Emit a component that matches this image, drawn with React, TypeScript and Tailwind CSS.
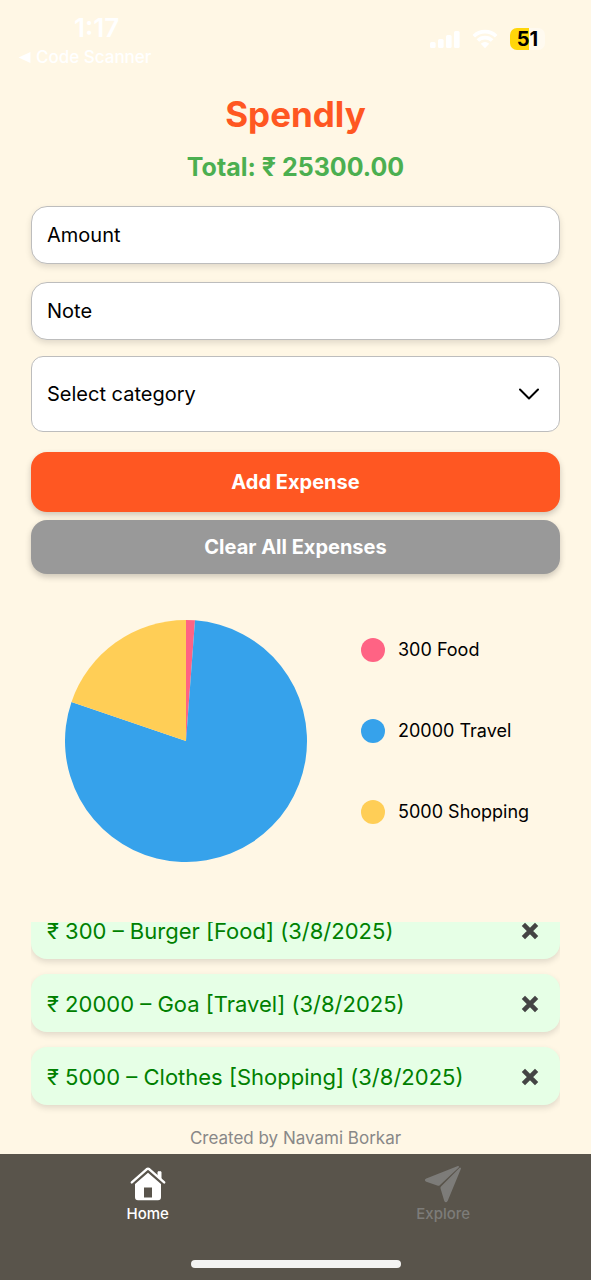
import { useState } from "react";

type Expense = {
  amount: number;
  note: string;
  category: string;
  date: string;
};

const initialExpenses: Expense[] = [
  { amount: 300, note: "Burger", category: "Food", date: "3/8/2025" },
  { amount: 20000, note: "Goa", category: "Travel", date: "3/8/2025" },
  { amount: 5000, note: "Clothes", category: "Shopping", date: "3/8/2025" },
];

const categories = [
  { name: "Food", fill: "fill-[#ff6384]", dot: "bg-[#ff6384]" },
  { name: "Travel", fill: "fill-[#36a2eb]", dot: "bg-[#36a2eb]" },
  { name: "Shopping", fill: "fill-[#ffce56]", dot: "bg-[#ffce56]" },
];

function StatusBar() {
  return (
    <header className="flex h-24 shrink-0 items-start justify-between pl-[18px] pr-[46px] text-white">
      <div className="flex flex-col pt-3">
        <span className="pl-14 text-[26px] leading-8 font-semibold">1:17</span>
        <a href="#scanner" className="flex items-center gap-[5px] text-[17px] leading-[26px] font-medium">
          <svg viewBox="0 0 12 12" className="size-[13px]" fill="currentColor" aria-hidden="true">
            <path d="M11.5 1v10L0.5 6z" />
          </svg>
          Code Scanner
        </a>
      </div>
      <div className="flex items-center gap-3 pt-7">
        <svg viewBox="0 0 30 20" className="h-5 w-[30px]" fill="currentColor" aria-label="Signal">
          <rect x="0" y="13" width="5.6" height="6" rx="1.5" />
          <rect x="8" y="10" width="5.6" height="9" rx="1.5" />
          <rect x="16" y="6" width="5.6" height="13" rx="1.5" />
          <rect x="24" y="2" width="5.6" height="17" rx="1.5" />
        </svg>
        <svg viewBox="0 0 26 20" className="h-5 w-[26px]" fill="none" stroke="currentColor" strokeWidth="3.6" aria-label="Wi-Fi">
          <path d="M1.8 7.2a16 16 0 0 1 22.4 0" />
          <path d="M5.9 11.6a10 10 0 0 1 14.2 0" />
          <path d="M13 19.2l-4.2-4.4a6 6 0 0 1 8.4 0z" fill="currentColor" stroke="none" />
        </svg>
        <div className="flex h-[22px] w-[35px] items-center justify-center rounded-[7px] bg-[linear-gradient(to_right,#ffd60a_54%,#fffaf0_54%)] text-xl leading-none font-bold text-black">
          51
        </div>
      </div>
    </header>
  );
}

function PieChart({ totals }: { totals: number[] }) {
  const sum = totals.reduce((a, b) => a + b, 0);
  let angle = 0;
  const point = (a: number) => `${100 + 100 * Math.sin(a)} ${100 - 100 * Math.cos(a)}`;
  return (
    <svg viewBox="0 0 200 200" className="size-[242px] shrink-0" role="img" aria-label="Expenses by category">
      {totals.map((value, i) => {
        if (!value) return null;
        const start = angle;
        const sweep = (value / sum) * Math.PI * 2;
        angle += sweep;
        if (value === sum) {
          return <circle key={i} cx="100" cy="100" r="100" className={categories[i].fill} />;
        }
        return (
          <path
            key={i}
            className={categories[i].fill}
            d={`M100 100L${point(start)}A100 100 0 ${sweep > Math.PI ? 1 : 0} 1 ${point(angle)}Z`}
          />
        );
      })}
    </svg>
  );
}

function HomeIcon() {
  return (
    <svg viewBox="0 0 36 36" className="size-9" aria-hidden="true">
      <path d="M1.8 16.4L16.6 3.3a2.2 2.2 0 0 1 2.8 0L34.2 16.4" fill="none" stroke="currentColor" strokeWidth="2.4" strokeLinecap="round" strokeLinejoin="round" />
      <path d="M28 5.8h3v7.4l-3-2.6z" fill="currentColor" stroke="currentColor" strokeLinejoin="round" />
      <path fillRule="evenodd" fill="currentColor" d="M18 6.8L31 18v13.2a3 3 0 0 1-3 3H8a3 3 0 0 1-3-3V18zM14 21.5v10h8v-10z" />
    </svg>
  );
}

function PlaneIcon() {
  return (
    <svg viewBox="0 0 38 38" className="size-[38px]" fill="currentColor" stroke="currentColor" strokeWidth="1.6" strokeLinejoin="round" aria-hidden="true">
      <path d="M34.2 1.8L2.6 14.2q-1.8.9 0 1.8L14.2 20q.6.1 1-.3z" />
      <path d="M36.2 3.4L17.6 22q-.5.6-.3 1.2L21 35.6q.9 1.6 1.9 0z" />
    </svg>
  );
}

export default function App() {
  const [expenses, setExpenses] = useState(initialExpenses);
  const [amount, setAmount] = useState("");
  const [note, setNote] = useState("");
  const [category, setCategory] = useState("");

  const total = expenses.reduce((acc, e) => acc + e.amount, 0);
  const totals = categories.map((c) =>
    expenses.filter((e) => e.category === c.name).reduce((acc, e) => acc + e.amount, 0),
  );

  const addExpense = () => {
    const value = Number(amount);
    if (!value || !category) return;
    setExpenses([...expenses, { amount: value, note, category, date: new Date().toLocaleDateString() }]);
    setAmount("");
    setNote("");
    setCategory("");
  };

  const field =
    "h-[58px] w-full rounded-2xl border border-[#bdbdbd] bg-white px-[15px] text-xl text-black shadow-[0_3px_6px_rgba(0,0,0,0.12)] placeholder:text-black";

  return (
    <div className="flex h-screen flex-col bg-[#fff7e5] font-['Inter','Noto_Sans',sans-serif]">
      <StatusBar />
      <main className="flex min-h-0 flex-1 flex-col px-[31px]">
        <h1 className="text-center text-[35px] leading-9 font-bold text-[#ff5722]">Spendly</h1>
        <p className="mt-[17px] text-center text-[25px] leading-9 font-bold text-[#4caf50]">
          Total: ₹ {total.toFixed(2)}
        </p>
        <div className="mt-[21px] flex flex-col gap-4">
          <div className="flex flex-col gap-[18px]">
            <input
              aria-label="Amount"
              placeholder="Amount"
              inputMode="decimal"
              className={field}
              value={amount}
              onChange={(e) => setAmount(e.target.value)}
            />
            <input
              aria-label="Note"
              placeholder="Note"
              className={field}
              value={note}
              onChange={(e) => setNote(e.target.value)}
            />
          </div>
          <div className="relative">
            <select
              aria-label="Category"
              value={category}
              onChange={(e) => setCategory(e.target.value)}
              className="block h-[76px] w-full appearance-none rounded-xl border border-[#bdbdbd] bg-white px-[15px] text-xl text-black"
            >
              <option value="">Select category</option>
              {categories.map((c) => (
                <option key={c.name}>{c.name}</option>
              ))}
            </select>
            <svg viewBox="0 0 20 12" className="pointer-events-none absolute inset-y-0 right-[21px] my-auto h-3 w-5" fill="none" stroke="black" strokeWidth="2" strokeLinecap="round" strokeLinejoin="round" aria-hidden="true">
              <path d="M1 1.5l9 9 9-9" />
            </svg>
          </div>
        </div>
        <div className="mt-5 flex flex-col gap-2 text-xl font-bold text-white">
          <button
            type="button"
            onClick={addExpense}
            className="h-[60px] rounded-2xl bg-[#ff5722] shadow-[0_3px_6px_rgba(0,0,0,0.2)]"
          >
            Add Expense
          </button>
          <button
            type="button"
            onClick={() => setExpenses([])}
            className="h-[54px] rounded-2xl bg-[#999999] shadow-[0_3px_6px_rgba(0,0,0,0.2)]"
          >
            Clear All Expenses
          </button>
        </div>
        <section className="mt-[46px] flex items-center gap-[54px] pl-[34px]">
          <PieChart totals={totals} />
          <ul className="flex flex-col gap-[57px] pb-5">
            {categories.map((c, i) => (
              <li key={c.name} className="flex items-center gap-[13px] text-lg leading-6 whitespace-nowrap">
                <span className={`size-6 rounded-full ${c.dot}`} />
                {totals[i]} {c.name}
              </li>
            ))}
          </ul>
        </section>
        <ul className="mt-[60px] flex min-h-0 flex-1 flex-col justify-end gap-[15px] overflow-hidden pb-[17px]">
          {expenses.map((e, i) => (
            <li
              key={i}
              className="flex h-[58px] shrink-0 items-center justify-between rounded-2xl bg-[#e6ffe6] pt-0.5 pr-[21px] pl-4 text-[#008000] shadow-[0_3px_6px_rgba(0,0,0,0.12)]"
            >
              <span className="text-[22px]">
                ₹ {e.amount} – {e.note} [{e.category}] ({e.date})
              </span>
              <button
                type="button"
                aria-label={`Delete ${e.note}`}
                onClick={() => setExpenses(expenses.filter((_, j) => j !== i))}
                className="text-[#444444]"
              >
                <svg viewBox="0 0 18 18" className="size-[18px]" stroke="currentColor" strokeWidth="4.6" aria-hidden="true">
                  <path d="M2.4 2.4l13.2 13.2M15.6 2.4L2.4 15.6" />
                </svg>
              </button>
            </li>
          ))}
        </ul>
        <p className="pt-1 pb-1 text-center text-[17px] leading-6 text-[#888888]">Created by Navami Borkar</p>
      </main>
      <footer className="flex h-[126px] shrink-0 flex-col items-center justify-between bg-[#59544b] pb-3">
        <nav className="grid w-full grid-cols-2 pt-[10px] text-[15px] leading-5 font-medium">
          <a href="#home" className="flex flex-col items-center text-white">
            <span className="flex h-10 items-center">
              <HomeIcon />
            </span>
            Home
          </a>
          <a href="#explore" className="flex flex-col items-center text-[#7d7c79]">
            <span className="flex h-10 items-center">
              <PlaneIcon />
            </span>
            Explore
          </a>
        </nav>
        <div className="h-2 w-[210px] rounded-full bg-[#f3f3f2]" />
      </footer>
    </div>
  );
}
